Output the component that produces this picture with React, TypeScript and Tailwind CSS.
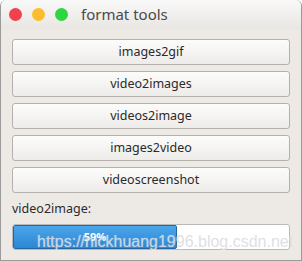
import React from "react";

const buttons = ["images2gif", "video2images", "videos2image", "images2video", "videoscreenshot"];

export default function App() {
  return (
    <div
      className="w-[302px] h-[261px] bg-[#edeae6] flex flex-col overflow-hidden rounded-t-[6px] border-x border-b border-[#9a9a9a] relative"
      style={{ fontFamily: '"Noto Sans", "Open Sans", sans-serif' }}
    >
      <div className="h-[29px] shrink-0 flex items-center bg-gradient-to-b from-[#f9f9f9] to-[#e9e6e2] pl-[8px]">
        <div className="w-[13px] h-[13px] rounded-full bg-[#f2414c]" />
        <div className="w-[13px] h-[13px] rounded-full bg-[#fbbd2e] ml-[10px]" />
        <div className="w-[13px] h-[13px] rounded-full bg-[#2ed63f] ml-[10px]" />
        <span className="ml-[13px] text-[15px] text-[#4a4a4a] leading-none">format tools</span>
      </div>
      <div className="flex flex-col px-[11px] pt-[10px]">
        <div className="flex flex-col gap-[6px]">
          {buttons.map((b) => (
            <div
              key={b}
              className="h-[26px] flex items-center justify-center rounded-[3px] border border-[#b4b1ad] bg-gradient-to-b from-[#fcfcfb] to-[#eeece9] text-[12.5px] text-[#2a2a2a]"
            >
              {b}
            </div>
          ))}
        </div>
        <div className="mt-[8px] text-[12.5px] text-[#2a2a2a] leading-[16px]">video2image:</div>
        <div className="mt-[7px] h-[26px] flex rounded-[3px] border border-[#b9b9b9] bg-white overflow-hidden">
          <div className="w-[164px] h-full flex items-center justify-center rounded-[2px] border border-[#2566a0] bg-gradient-to-b from-[#4aa6ea] to-[#2c86d4] text-white text-[11px] font-bold">
            59%
          </div>
        </div>
      </div>
      <div
        className="absolute left-[36px] top-[234px] text-[16px] text-[#d4d8dc]/80 leading-none whitespace-nowrap [text-shadow:0_0_1px_rgba(255,255,255,0.6)]"
        style={{ fontFamily: '"Liberation Sans", Arial, sans-serif' }}
      >
        https://nickhuang1996.blog.csdn.net
      </div>
    </div>
  );
}
